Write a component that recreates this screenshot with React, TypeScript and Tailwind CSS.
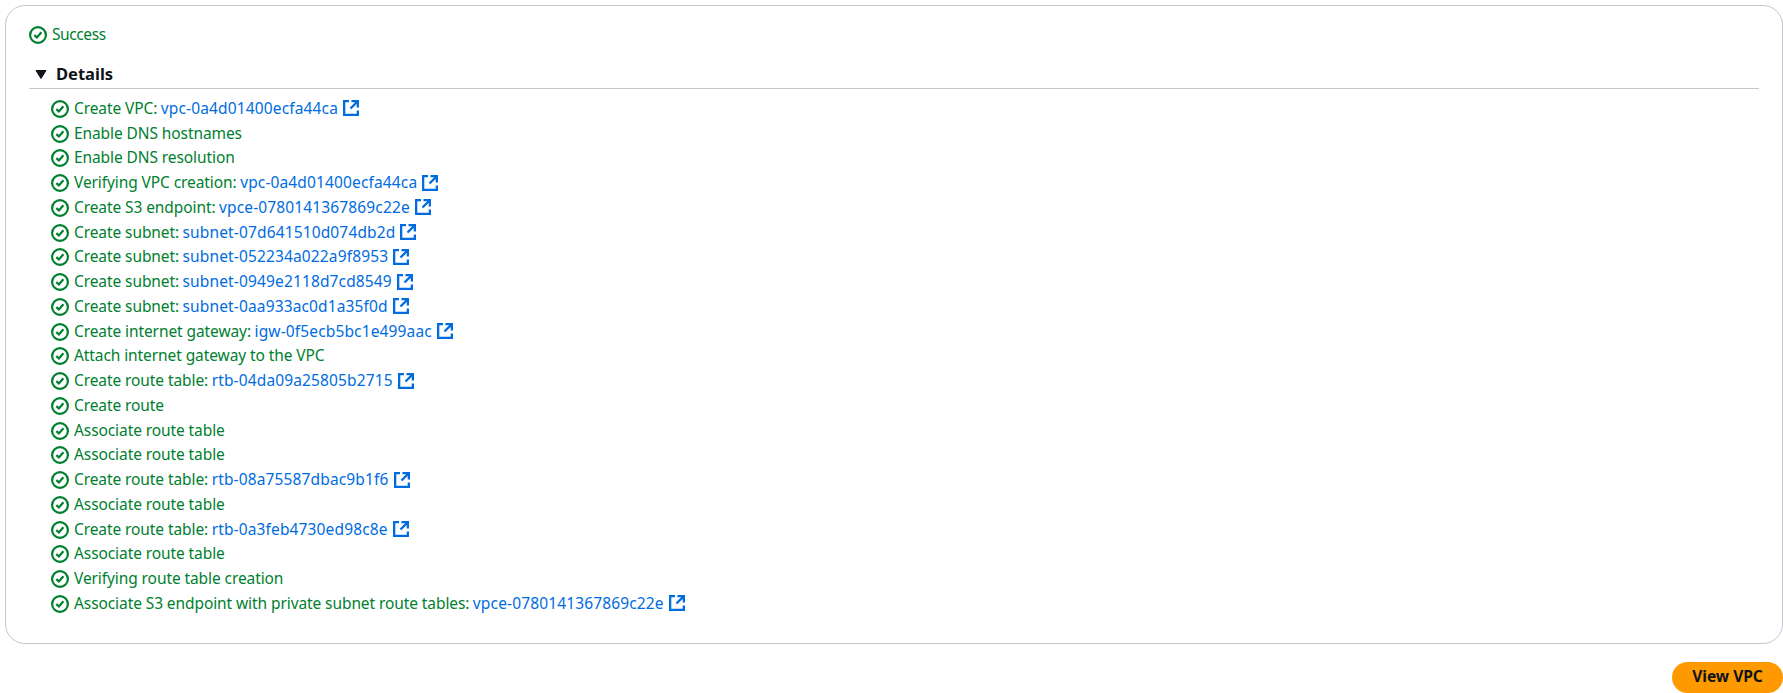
import clsx from 'clsx';

interface Step {
  label: string;
  resource?: string;
}

const steps: Step[] = [
  { label: 'Create VPC:', resource: 'vpc-0a4d01400ecfa44ca' },
  { label: 'Enable DNS hostnames' },
  { label: 'Enable DNS resolution' },
  { label: 'Verifying VPC creation:', resource: 'vpc-0a4d01400ecfa44ca' },
  { label: 'Create S3 endpoint:', resource: 'vpce-0780141367869c22e' },
  { label: 'Create subnet:', resource: 'subnet-07d641510d074db2d' },
  { label: 'Create subnet:', resource: 'subnet-052234a022a9f8953' },
  { label: 'Create subnet:', resource: 'subnet-0949e2118d7cd8549' },
  { label: 'Create subnet:', resource: 'subnet-0aa933ac0d1a35f0d' },
  { label: 'Create internet gateway:', resource: 'igw-0f5ecb5bc1e499aac' },
  { label: 'Attach internet gateway to the VPC' },
  { label: 'Create route table:', resource: 'rtb-04da09a25805b2715' },
  { label: 'Create route' },
  { label: 'Associate route table' },
  { label: 'Associate route table' },
  { label: 'Create route table:', resource: 'rtb-08a75587dbac9b1f6' },
  { label: 'Associate route table' },
  { label: 'Create route table:', resource: 'rtb-0a3feb4730ed98c8e' },
  { label: 'Associate route table' },
  { label: 'Verifying route table creation' },
  {
    label: 'Associate S3 endpoint with private subnet route tables:',
    resource: 'vpce-0780141367869c22e',
  },
];

const SuccessIcon = ({ className }: { className?: string }) => (
  <svg
    viewBox="0 0 18 18"
    className={clsx('h-[18px] w-[18px] shrink-0', className)}
    fill="none"
    stroke="#00802f"
    strokeWidth="2.2"
  >
    <circle cx="9" cy="9" r="7.9" />
    <path d="M5.3 9.1 7.9 11.4 12.4 6.2" />
  </svg>
);

const ExternalIcon = () => (
  <svg
    viewBox="0 0 16 16"
    className="ml-[5px] h-4 w-4 shrink-0"
    fill="none"
    stroke="#006ce0"
    strokeWidth="2.3"
  >
    <path d="M6 1.15H1.15v13.7h13.7V10.5" />
    <path d="M8.5 1.15h6.35V7.5M14.5 1.5 7.5 8.5" />
  </svg>
);

const StepRow = ({ label, resource }: Step) => (
  <li className="flex h-[24.75px] items-center whitespace-nowrap">
    <SuccessIcon className="mt-px" />
    <span className="ml-[5px] tracking-[-0.09px]">{label}</span>
    {resource && (
      <a href="#" className="ml-[3.5px] flex items-center tracking-[0.14px] text-[#006ce0]">
        <span>{resource}</span>
        <ExternalIcon />
      </a>
    )}
  </li>
);

const App = () => (
  <main className="h-[693px] bg-white pt-[5px] pl-[5px] font-['Noto_Sans',sans-serif] text-[15.5px] text-[#00802f]">
    <section className="h-[639px] rounded-[20px] border border-[#c6c6cd] px-[23px] pt-[17px]">
      <div className="flex h-6 items-center">
        <SuccessIcon />
        <span className="ml-[5px] tracking-[-0.4px]">Success</span>
      </div>
      <h3 className="mt-[11px] flex h-[31px] items-center border-b border-[#c6c6cd] pt-0.5 pl-[6px] text-[16.5px] font-bold text-[#0f141a]">
        <svg viewBox="0 0 12 10" className="mt-0.5 h-[10px] w-3" fill="#0f141a">
          <path d="M1 .5h10l-5 8z" stroke="#0f141a" strokeLinejoin="round" />
        </svg>
        <span className="ml-[9px]">Details</span>
      </h3>
      <ul className="mt-[7px] pl-[22px]">
        {steps.map((step, index) => (
          <StepRow key={index} {...step} />
        ))}
      </ul>
    </section>
    <div className="mt-[18px] flex justify-end">
      <button
        type="button"
        className="h-[31px] w-[111px] rounded-full bg-[#ff9900] pb-0.5 text-[15.5px] font-bold text-[#0f141a]"
      >
        View VPC
      </button>
    </div>
  </main>
);

export default App;
